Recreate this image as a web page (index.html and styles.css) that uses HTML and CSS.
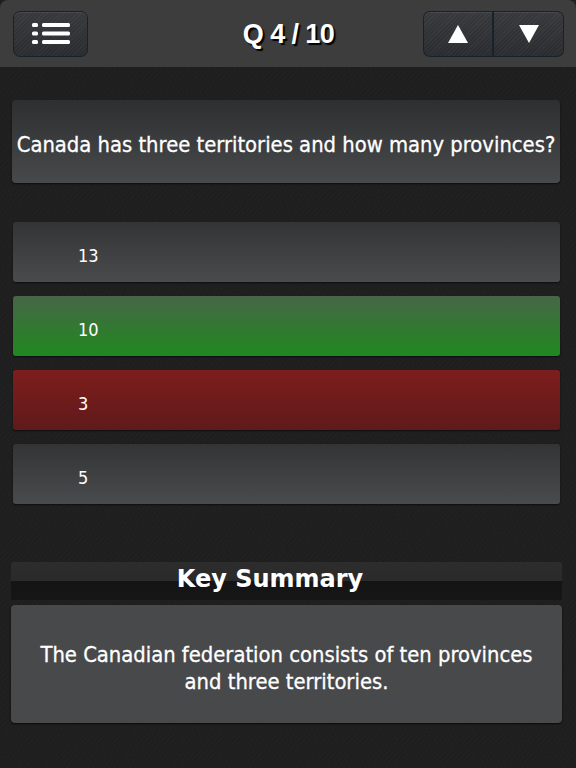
FILE: index.html
```html
<!DOCTYPE html>
<html>
	<head>
		<meta charset="utf-8">
		<title>Quiz</title>
		<link rel="stylesheet" href="styles.css">
	</head>
	<body>

		<div class="page">
			<!-- top bar -->
			<div class="topBar">
				<div class="btn menuBtn">
					<svg width="38" height="21" viewBox="0 0 38 21">
						<rect x="0" y="0" width="6" height="4" rx="1.5" fill="#fff"/>
						<rect x="0" y="8.5" width="6" height="4" rx="1.5" fill="#fff"/>
						<rect x="0" y="17" width="6" height="4" rx="1.5" fill="#fff"/>
						<rect x="10" y="0" width="28" height="4" rx="1.5" fill="#fff"/>
						<rect x="10" y="8.5" width="28" height="4" rx="1.5" fill="#fff"/>
						<rect x="10" y="17" width="28" height="4" rx="1.5" fill="#fff"/>
					</svg>
				</div>
				<div class="title">Q 4 / 10</div>
				<div class="navGroup">
					<div class="btn navBtn">
						<svg width="20" height="18" viewBox="0 0 20 18"><path d="M10 0 L20 18 L0 18 Z" fill="#fff"/></svg>
					</div>
					<div class="btn navBtn">
						<svg width="20" height="18" viewBox="0 0 20 18"><path d="M0 0 L20 0 L10 18 Z" fill="#fff"/></svg>
					</div>
				</div>
			</div>

			<div class="content">
				<div class="question">Canada has three territories and how many provinces?</div>

				<div class="answers">
					<div class="answer">13</div>
					<div class="answer right">10</div>
					<div class="answer wrong">3</div>
					<div class="answer">5</div>
				</div>

				<div class="summaryHead">Key Summary</div>
				<div class="summary">The Canadian federation consists of ten provinces<br>and three territories.</div>
			</div>
		</div>

	</body>
</html>
```

FILE: styles.css
```css
* {
	margin: 0;
	padding: 0;
	box-sizing: border-box;
}

body {
	background: #1e1e1e;
	font-family: "DejaVu Sans Condensed", "DejaVu Sans", sans-serif;
	color: #fff;
}

.page {
	width: 576px;
	height: 768px;
	background:
		repeating-linear-gradient(35deg, rgba(255,255,255,0.012) 0 1px, transparent 1px 3px),
		repeating-linear-gradient(-50deg, rgba(0,0,0,0.08) 0 1px, transparent 1px 4px),
		#1f1f1f;
	overflow: hidden;
}

/* top bar */
.topBar {
	height: 67px;
	background: #3c3d3c;
	border-radius: 8px 8px 0 0;
	display: grid;
	grid-template-columns: 1fr auto 1fr;
	align-items: center;
	padding: 0 12px 0 13px;
}

.btn {
	height: 46px;
	display: flex;
	align-items: center;
	justify-content: center;
	border: 1px solid #17222c;
	border-radius: 7px;
	background:
		repeating-linear-gradient(135deg, rgba(255,255,255,0.035) 0 1px, transparent 1px 3px),
		linear-gradient(#38393c, #2b2c2f);
	box-shadow: inset 0 1px 0 rgba(255,255,255,0.08);
}

.menuBtn {
	width: 75px;
}

.title {
	font-family: "Liberation Sans", Arial, sans-serif;
	font-weight: bold;
	font-size: 27px;
	letter-spacing: -0.6px;
	text-shadow: 2px 2px 1px #000;
	padding-top: 2px;
}

.navGroup {
	display: flex;
	justify-self: end;
}

.navBtn {
	width: 71px;
}

.navGroup .navBtn:first-child {
	border-radius: 7px 0 0 7px;
	border-right-width: 2px;
}

.navGroup .navBtn:last-child {
	width: 70px;
	border-left: none;
	border-radius: 0 7px 7px 0;
}

/* question + answers */
.content {
	padding: 33px 16px 0 12px;
}

.question {
	height: 83px;
	display: flex;
	align-items: center;
	justify-content: center;
	padding-top: 5px;
	font-size: 21.8px;
	-webkit-text-stroke: 0.3px #fff;
	white-space: nowrap;
	border-radius: 4px;
	background: linear-gradient(#2e2f31, #48494b);
	box-shadow: 0 1px 2px rgba(0,0,0,0.6);
}

.answers {
	margin: 39px 0 0 1px;
	display: flex;
	flex-direction: column;
	gap: 14px;
}

.answer {
	height: 60px;
	display: flex;
	align-items: center;
	padding: 7px 0 0 65px;
	font-size: 18px;
	border-radius: 3px;
	background: linear-gradient(#333436, #4a4b4d);
	box-shadow: 0 1px 2px rgba(0,0,0,0.6);
}

.answer.right {
	background: linear-gradient(#476547, #1f891f);
}

.answer.wrong {
	background: linear-gradient(#7e1d1d, #5f1a1a);
}

/* key summary */
.summaryHead {
	margin: 58px -2px 0 -1px;
	height: 38px;
	padding: 3px 33px 0 0;
	text-align: center;
	font-family: "DejaVu Sans", sans-serif;
	font-size: 24px;
	font-weight: bold;
	border-radius: 3px 3px 0 0;
	background: linear-gradient(#2d2d2d 0, #2a2a2a 50%, #141414 50%, #161616 100%);
}

.summary {
	margin: 5px -2px 0 -1px;
	height: 118px;
	display: flex;
	align-items: center;
	justify-content: center;
	text-align: center;
	font-size: 21.8px;
	-webkit-text-stroke: 0.3px #fff;
	line-height: 27px;
	border-radius: 4px;
	background: #48494b;
	box-shadow: 0 1px 2px rgba(0,0,0,0.7);
	padding-top: 7px;
}
```
